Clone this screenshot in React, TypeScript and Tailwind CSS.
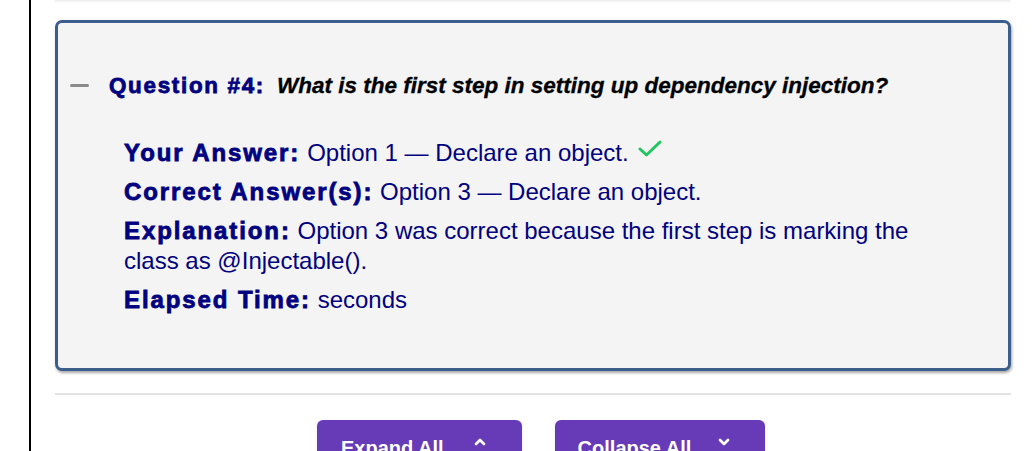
import { ChevronUp, ChevronDown } from 'lucide-react';

const heavy = 'font-bold tracking-[1.9px] [-webkit-text-stroke:0.8px_#000080]';

export default function App() {
  return (
    <div className="min-h-[451px] bg-white pl-[29px] font-['Liberation_Sans',Arial,sans-serif] overflow-hidden">
      <div className="min-h-[451px] border-l-2 border-black pl-[24px] pr-[22px]">
        <div className="h-[3px] bg-gradient-to-b from-[#ececec] to-white" />

        <div className="mt-[17px] rounded-[7px] border-[3px] border-[#3b5e8c] bg-[#f4f4f4] shadow-[1px_2px_3px_rgba(0,0,0,0.35)] pt-[49px] pb-[53px]">
          <div className="flex items-center pl-[12px] leading-[27px]">
            <span className="w-[19px] h-[3px] bg-[#8a8a8a] rounded-sm" />
            <span className="ml-[20px] text-[22.4px] text-[#000080] font-bold tracking-[1.7px] [-webkit-text-stroke:0.8px_#000080]">
              Question #4:
            </span>
            <span className="ml-[12px] text-[22.5px] font-bold italic text-black [-webkit-text-stroke:0.3px_#000]">
              What is the first step in setting up dependency injection?
            </span>
          </div>

          <div className="mt-[39px] ml-[66px] mr-[58px] flex flex-col gap-[9px] text-[24px] leading-[30px] text-[#000080]">
            <p className="flex items-center">
              <span className={heavy}>Your Answer:</span>
              <span className="ml-[7px]">Option 1 — Declare an object.</span>
              <svg className="ml-[9px] -mt-[8px]" width="24" height="18" viewBox="0 0 24 18" fill="none">
                <path d="M2 9 L8.5 15 L22 2" stroke="#22c55e" strokeWidth="3" strokeLinecap="round" strokeLinejoin="round" />
              </svg>
            </p>
            <p>
              <span className={heavy}>Correct Answer(s):</span> Option 3 — Declare an object.
            </p>
            <p>
              <span className={heavy}>Explanation:</span> Option 3 was correct because the first step is marking the class
              as @Injectable().
            </p>
            <p>
              <span className={heavy}>Elapsed Time:</span> seconds
            </p>
          </div>
        </div>

        <div className="mt-[22px] h-[2px] bg-[#e2e2e2]" />

        <div className="mt-[25px] flex gap-[33px] pl-[262px]">
          <button className="flex items-start h-[60px] rounded-[6px] bg-[#673ab7] pl-[24px] pr-[34px] pt-[13px] text-[20px] font-bold text-white shadow">
            <span className="leading-[30px]">Expand All</span>
            <ChevronUp className="ml-[28px] mt-[1px] w-[16px] h-[16px]" strokeWidth={4} />
          </button>
          <button className="flex items-start h-[60px] rounded-[6px] bg-[#673ab7] pl-[23px] pr-[33px] pt-[13px] text-[20px] font-bold text-white shadow">
            <span className="leading-[30px]">Collapse All</span>
            <ChevronDown className="ml-[25px] mt-[1px] w-[16px] h-[16px]" strokeWidth={4} />
          </button>
        </div>
      </div>
    </div>
  );
}
